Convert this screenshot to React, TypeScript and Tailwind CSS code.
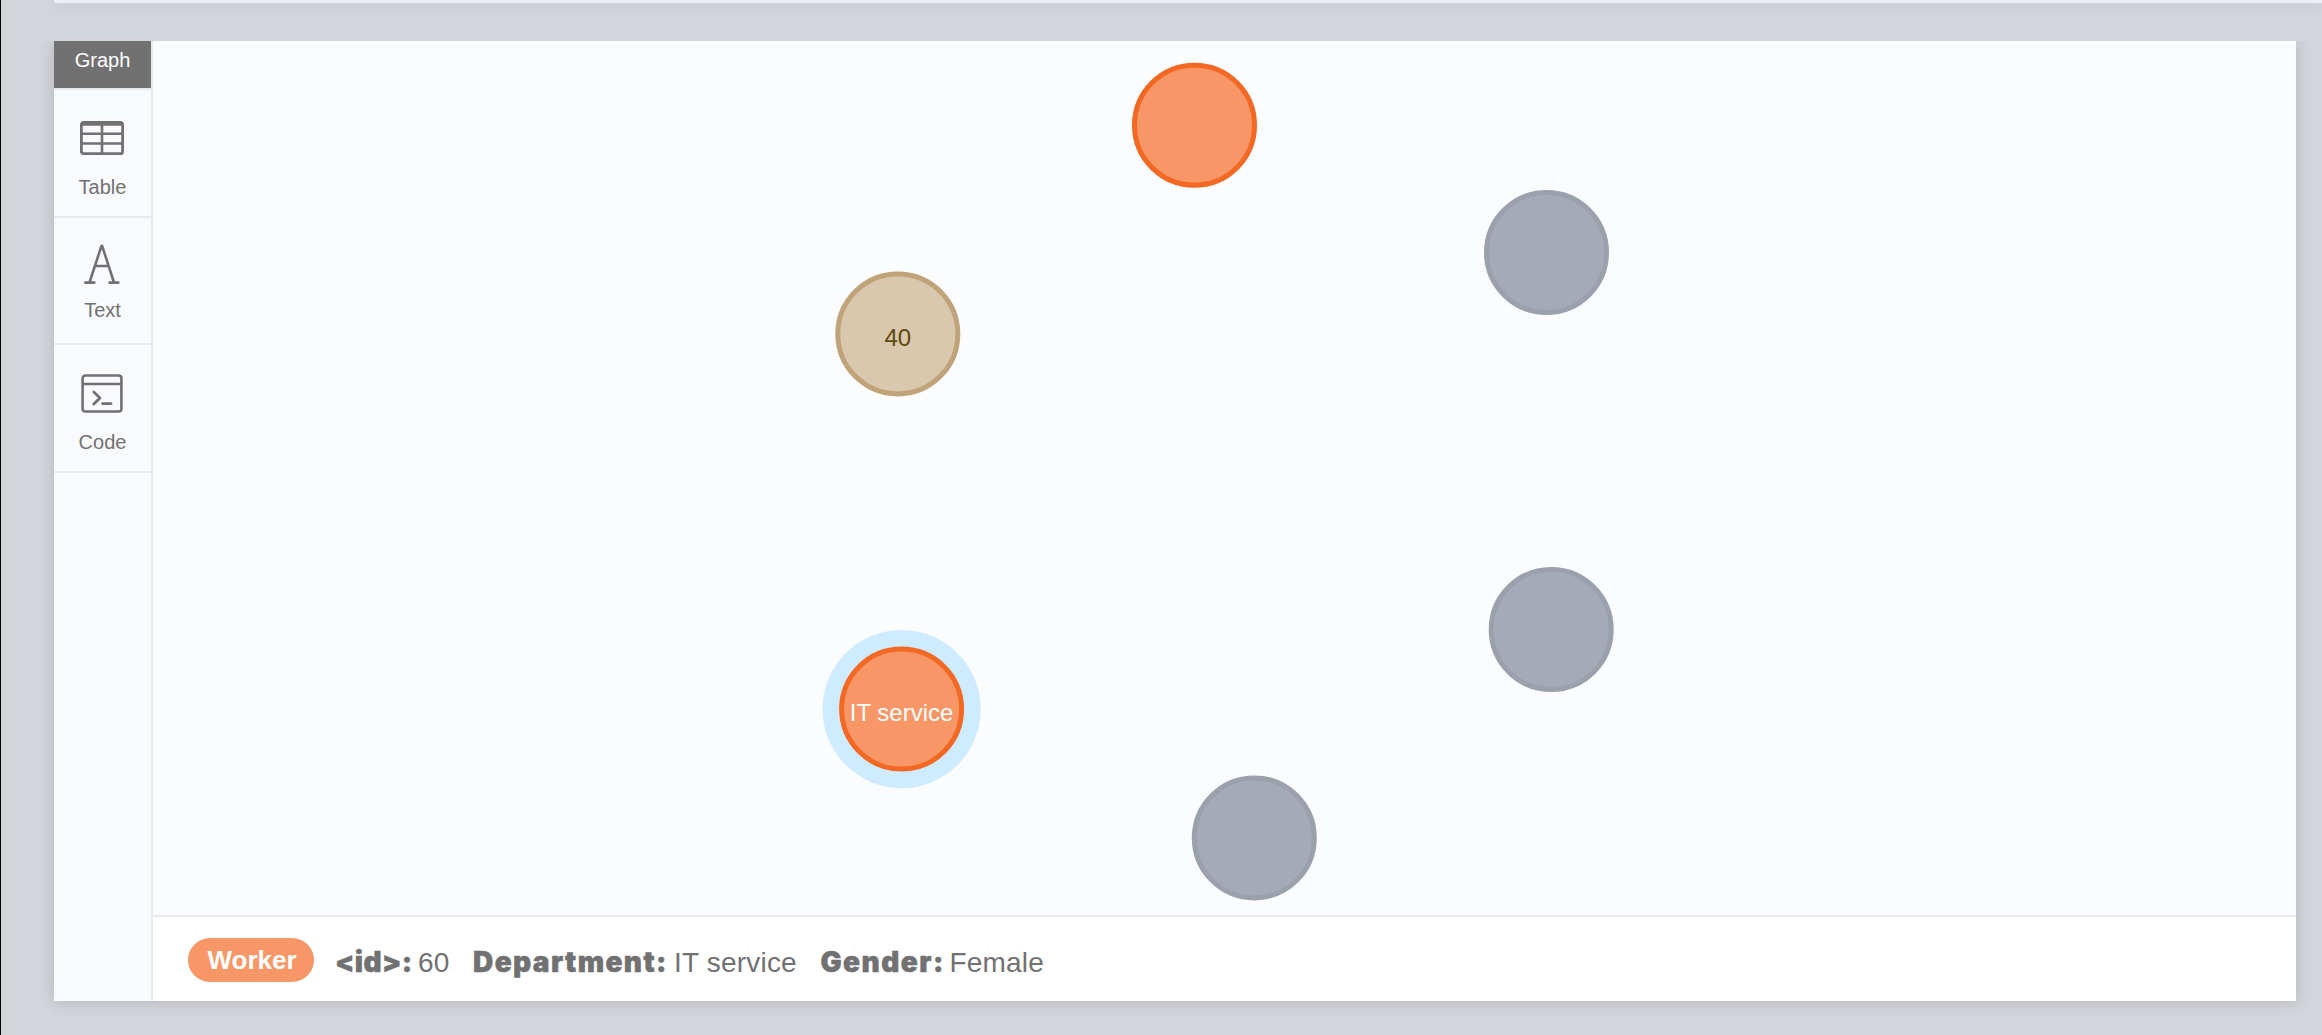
import type { ReactNode } from "react";

const nodes = [
  { id: "worker", x: 1194.5, y: 125.2, circle: "fill-[#f79767] stroke-[#f36924]", text: "", label: "", selected: false },
  { id: "dept-a", x: 1546.5, y: 252.5, circle: "fill-[#a5abb6] stroke-[#9aa1ac]", text: "", label: "", selected: false },
  { id: "age", x: 897.8, y: 333.9, circle: "fill-[#d9c8ae] stroke-[#c0a378]", text: "fill-[#604a0e]", label: "40", selected: false },
  { id: "dept-b", x: 1551.2, y: 629.5, circle: "fill-[#a5abb6] stroke-[#9aa1ac]", text: "", label: "", selected: false },
  { id: "it", x: 901.6, y: 709.1, circle: "fill-[#f79767] stroke-[#f36924]", text: "fill-white", label: "IT service", selected: true },
  { id: "dept-c", x: 1254.3, y: 837.9, circle: "fill-[#a5abb6] stroke-[#9aa1ac]", text: "", label: "", selected: false },
];

function Graph() {
  return (
    <svg className="block h-full w-full" viewBox="153 41 2143 874">
      {nodes.map((n) => (
        <g key={n.id}>
          {n.selected && <circle cx={n.x} cy={n.y} r="79.1" className="fill-[#cfebff]" />}
          <circle cx={n.x} cy={n.y} r="60" strokeWidth="5" className={n.circle} />
          {n.label && (
            <text x={n.x} y={n.y + 12} textAnchor="middle" className={`text-2xl ${n.text}`}>
              {n.label}
            </text>
          )}
        </g>
      ))}
    </svg>
  );
}

function TableIcon() {
  return (
    <svg width="44" height="34" viewBox="0 0 44 34" fill="none" stroke="#717172" strokeWidth="2.8">
      <rect x="1.4" y="1.4" width="41.2" height="31.2" rx="2.2" />
      <path d="M1.4 3.2H42.6" strokeWidth="3" />
      <path d="M1.4 12.7H42.6M1.4 22.5H42.6M22 1.4V32.6" strokeWidth="2.6" />
    </svg>
  );
}

function TextIcon() {
  return (
    <svg width="36" height="40" viewBox="0 0 36 40" fill="none" stroke="#717172" strokeWidth="2.6" strokeLinecap="round" strokeLinejoin="round">
      <path d="M5.5 38.5L17.5 1.8H18.1L30 38.5M11 22H24.5M1.3 38.6H10.4M25.5 38.6H34.4" />
    </svg>
  );
}

function CodeIcon() {
  return (
    <svg width="42" height="39" viewBox="0 0 42 39" fill="none" stroke="#717172" strokeWidth="2.6" strokeLinecap="round" strokeLinejoin="round">
      <rect x="1.6" y="1.5" width="38.8" height="36" rx="2.8" />
      <path d="M1.6 10H40.4" strokeLinecap="butt" />
      <path d="M12.8 18L19 24L12.8 30M21.5 29.6H30" strokeWidth="2.8" />
    </svg>
  );
}

function Tab({ icon, label, className }: { icon: ReactNode; label: string; className: string }) {
  return (
    <button className={`flex flex-col items-center border-b-2 border-[#e6e9ef] text-xl leading-6 text-[#717172] ${className}`}>
      <span className="mr-px">{icon}</span>
      <span>{label}</span>
    </button>
  );
}

function Property({ name, value, look }: { name: string; value: string; look: string }) {
  return (
    <div className="flex items-baseline">
      <span className={`shrink-0 font-[Inter] font-black whitespace-nowrap [-webkit-text-stroke:0.5px_#717172] ${look}`}>{name}:</span>
      <span className="tracking-[0.2px] whitespace-nowrap">{value}</span>
    </div>
  );
}

export default function App() {
  return (
    <div className="flex h-[1035px] w-[2322px] flex-col overflow-hidden border-l border-black bg-[#d2d5da] font-['Liberation_Sans',Arial,sans-serif]">
      <div className="ml-[53px] h-[3px] shrink-0 bg-[#eeeff5] shadow-[0_2px_14px_rgba(60,40,60,0.16)]" />
      <main className="mt-[38px] ml-[53px] flex h-[960px] w-[2242px] shrink-0 bg-[#fafcfe] shadow-[0_1px_15px_rgba(60,40,60,0.18)] [clip-path:inset(0_-26px_-34px_-26px)]">
        <nav className="flex w-[99px] shrink-0 flex-col border-r-2 border-[#e6e9ef] bg-[#f9fafd]">
          <button className="flex h-[49px] items-start justify-center border-b-2 border-[#e6e9ef] bg-[#717172] bg-clip-padding pt-[7px] text-xl leading-6 text-white">
            Graph
          </button>
          <Tab icon={<TableIcon />} label="Table" className="h-32 gap-5 pt-[31px]" />
          <Tab icon={<TextIcon />} label="Text" className="h-[127px] gap-[14px] pt-[26px]" />
          <Tab icon={<CodeIcon />} label="Code" className="h-32 gap-[17px] pt-[29px]" />
        </nav>
        <section className="flex min-w-0 flex-1 flex-col">
          <div className="min-h-0 flex-1">
            <Graph />
          </div>
          <footer className="flex h-[86px] shrink-0 items-start border-t-2 border-[#e6e9ef] bg-white pt-[21px] pl-[35px]">
            <span className="flex h-11 w-[126px] items-center justify-center rounded-full bg-[#f79767] pl-[2px] text-[26px] font-bold text-white">
              Worker
            </span>
            <div className="ml-[21px] flex gap-[23.5px] pt-[8px] text-[28px] leading-8 text-[#717172]">
              <Property name="<id>" value="60" look="w-[83px] tracking-[0.4px]" />
              <Property name="Department" value="IT service" look="w-[201px] tracking-[1.4px]" />
              <Property name="Gender" value="Female" look="w-[129px] tracking-[1.5px]" />
            </div>
          </footer>
        </section>
      </main>
    </div>
  );
}
